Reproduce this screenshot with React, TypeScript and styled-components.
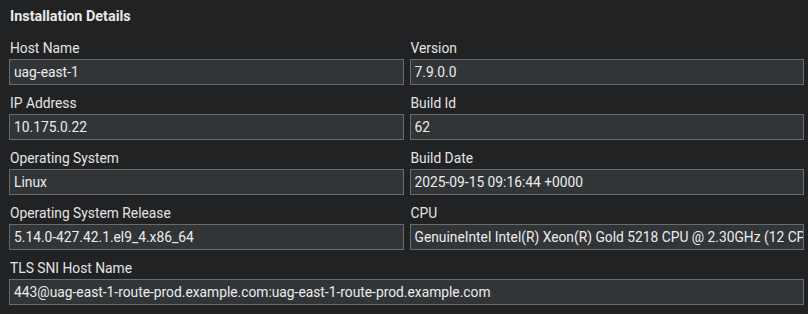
import React from "react";
import styled, { createGlobalStyle } from "styled-components";

const Global = createGlobalStyle`
  html, body { margin: 0; padding: 0; background: #212224; }
  body { font-family: Roboto, "Liberation Sans", Arial, sans-serif; }
`;

const Panel = styled.section`
  box-sizing: border-box;
  width: 808px;
  height: 314px;
  padding: 8px 4px 0 9px;
  background: #212224;
  color: #e6e6e6;
`;

const Title = styled.h2`
  margin: 0 0 0 1px;
  font-size: 14.4px;
  line-height: 18px;
  font-weight: 700;
  color: #e9e9e9;
`;

const Grid = styled.div`
  display: grid;
  grid-template-columns: 1fr 1fr;
  column-gap: 6px;
  row-gap: 10px;
  margin-top: 14px;
`;

const Field = styled.div<{ $full?: boolean }>`
  display: flex;
  flex-direction: column;
  gap: 3px;
  min-width: 0;
  grid-column: ${(p) => (p.$full ? "1 / -1" : "auto")};
`;

const Label = styled.label`
  font-size: 13.8px;
  line-height: 16px;
  padding-left: 1px;
  color: #e4e4e4;
`;

const Value = styled.div`
  box-sizing: border-box;
  height: 26px;
  padding: 0 4px;
  border: 1px solid #6a6b6c;
  background: #323538;
  font-size: 13.8px;
  line-height: 24px;
  color: #ececec;
  white-space: nowrap;
  overflow: hidden;
`;

const fields: { label: string; value: string; full?: boolean }[] = [
  { label: "Host Name", value: "uag-east-1" },
  { label: "Version", value: "7.9.0.0" },
  { label: "IP Address", value: "10.175.0.22" },
  { label: "Build Id", value: "62" },
  { label: "Operating System", value: "Linux" },
  { label: "Build Date", value: "2025-09-15 09:16:44 +0000" },
  { label: "Operating System Release", value: "5.14.0-427.42.1.el9_4.x86_64" },
  {
    label: "CPU",
    value: "GenuineIntel Intel(R) Xeon(R) Gold 5218 CPU @ 2.30GHz (12 CPUs)",
  },
  {
    label: "TLS SNI Host Name",
    value: "443@uag-east-1-route-prod.example.com:uag-east-1-route-prod.example.com",
    full: true,
  },
];

export default function App() {
  return (
    <>
      <Global />
      <Panel>
        <Title>Installation Details</Title>
        <Grid>
          {fields.map((f) => (
            <Field key={f.label} $full={f.full}>
              <Label>{f.label}</Label>
              <Value>{f.value}</Value>
            </Field>
          ))}
        </Grid>
      </Panel>
    </>
  );
}
